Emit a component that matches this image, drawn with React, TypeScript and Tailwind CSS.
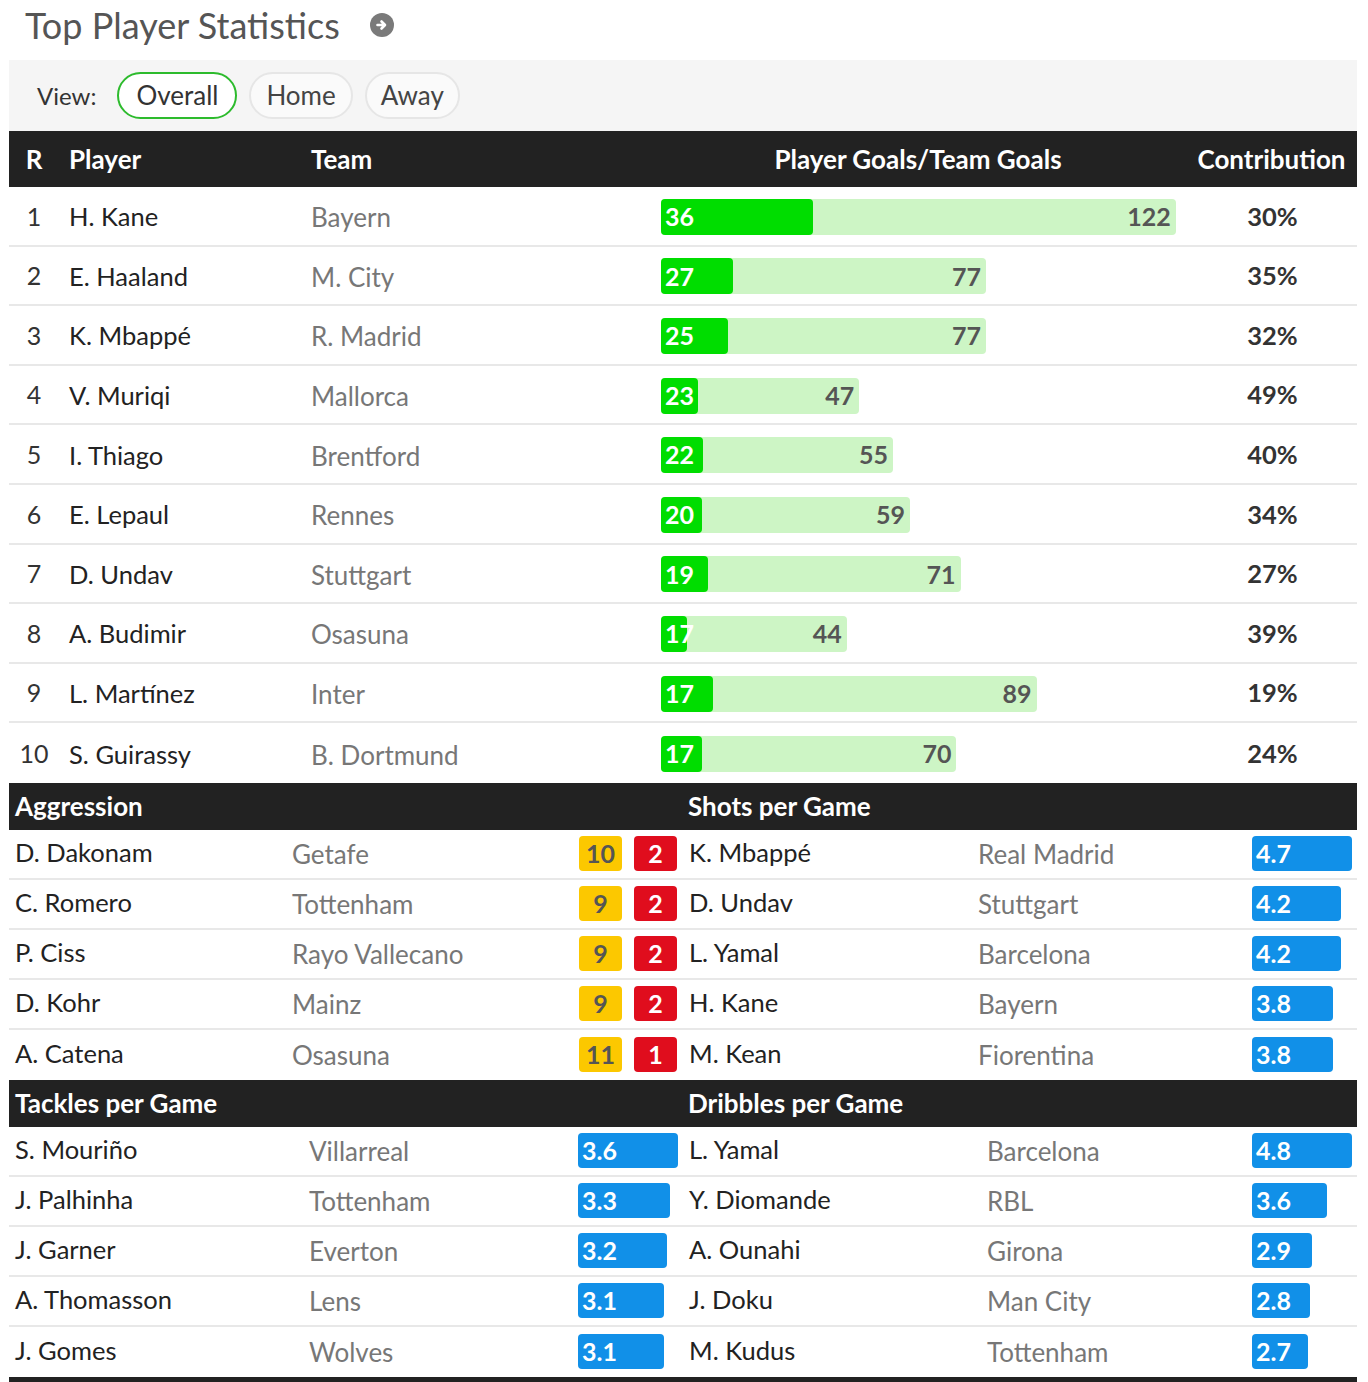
import React from 'react';

type ScorerRow = { rank: number; player: string; team: string; goals: number; teamGoals: number; pct: string };
type CardRow = { player: string; team: string; yellow: number; red: number };
type ValueRow = { player: string; team: string; value: number };

const scorers: ScorerRow[] = [
    { rank: 1, player: 'H. Kane', team: 'Bayern', goals: 36, teamGoals: 122, pct: '30%' },
    { rank: 2, player: 'E. Haaland', team: 'M. City', goals: 27, teamGoals: 77, pct: '35%' },
    { rank: 3, player: 'K. Mbappé', team: 'R. Madrid', goals: 25, teamGoals: 77, pct: '32%' },
    { rank: 4, player: 'V. Muriqi', team: 'Mallorca', goals: 23, teamGoals: 47, pct: '49%' },
    { rank: 5, player: 'I. Thiago', team: 'Brentford', goals: 22, teamGoals: 55, pct: '40%' },
    { rank: 6, player: 'E. Lepaul', team: 'Rennes', goals: 20, teamGoals: 59, pct: '34%' },
    { rank: 7, player: 'D. Undav', team: 'Stuttgart', goals: 19, teamGoals: 71, pct: '27%' },
    { rank: 8, player: 'A. Budimir', team: 'Osasuna', goals: 17, teamGoals: 44, pct: '39%' },
    { rank: 9, player: 'L. Martínez', team: 'Inter', goals: 17, teamGoals: 89, pct: '19%' },
    { rank: 10, player: 'S. Guirassy', team: 'B. Dortmund', goals: 17, teamGoals: 70, pct: '24%' },
];

const aggression: CardRow[] = [
    { player: 'D. Dakonam', team: 'Getafe', yellow: 10, red: 2 },
    { player: 'C. Romero', team: 'Tottenham', yellow: 9, red: 2 },
    { player: 'P. Ciss', team: 'Rayo Vallecano', yellow: 9, red: 2 },
    { player: 'D. Kohr', team: 'Mainz', yellow: 9, red: 2 },
    { player: 'A. Catena', team: 'Osasuna', yellow: 11, red: 1 },
];

const shots: ValueRow[] = [
    { player: 'K. Mbappé', team: 'Real Madrid', value: 4.7 },
    { player: 'D. Undav', team: 'Stuttgart', value: 4.2 },
    { player: 'L. Yamal', team: 'Barcelona', value: 4.2 },
    { player: 'H. Kane', team: 'Bayern', value: 3.8 },
    { player: 'M. Kean', team: 'Fiorentina', value: 3.8 },
];

const tackles: ValueRow[] = [
    { player: 'S. Mouriño', team: 'Villarreal', value: 3.6 },
    { player: 'J. Palhinha', team: 'Tottenham', value: 3.3 },
    { player: 'J. Garner', team: 'Everton', value: 3.2 },
    { player: 'A. Thomasson', team: 'Lens', value: 3.1 },
    { player: 'J. Gomes', team: 'Wolves', value: 3.1 },
];

const dribbles: ValueRow[] = [
    { player: 'L. Yamal', team: 'Barcelona', value: 4.8 },
    { player: 'Y. Diomande', team: 'RBL', value: 3.6 },
    { player: 'A. Ounahi', team: 'Girona', value: 2.9 },
    { player: 'J. Doku', team: 'Man City', value: 2.8 },
    { player: 'M. Kudus', team: 'Tottenham', value: 2.7 },
];

const PX_PER_GOAL = 4.22;
const MAX_GOALS = 122;

function GoalBar({ goals, teamGoals }: { goals: number; teamGoals: number }) {
    const outer = teamGoals * PX_PER_GOAL;
    const inner = (outer * goals) / MAX_GOALS;
    return (
        <div className="relative h-[36px] rounded-[4px] bg-[#cdf5c5]" style={{ width: outer }}>
            <div className="absolute left-0 top-0 h-full rounded-[4px] bg-[#00dd00]" style={{ width: inner }} />
            <span className="absolute left-[4px] top-0 h-full flex items-center text-[25px] font-bold text-white">{goals}</span>
            <span className="absolute right-[5px] top-0 h-full flex items-center text-[25px] font-bold text-[#555]">{teamGoals}</span>
        </div>
    );
}

function ValueBar({ value, max }: { value: number; max: number }) {
    return (
        <div className="h-[35px] rounded-[4px] bg-[#1190e8] flex items-center pl-[4px]" style={{ width: (value / max) * 100 }}>
            <span className="text-[25px] font-bold text-white">{value.toFixed(1)}</span>
        </div>
    );
}

function SectionHeader({ left, right }: { left: string; right: string }) {
    return (
        <div className="flex h-[47px] bg-[#222] text-white text-[26px] font-bold">
            <div className="w-[674px] flex items-center pl-[6px]">{left}</div>
            <div className="w-[674px] flex items-center pl-[5px]">{right}</div>
        </div>
    );
}

export default function App() {
    const shotsMax = Math.max(...shots.map((s) => s.value));
    const tacklesMax = Math.max(...tackles.map((s) => s.value));
    const dribblesMax = Math.max(...dribbles.map((s) => s.value));

    return (
        <div className="w-[1368px] bg-white font-['Lato','Noto_Sans',sans-serif]">
            <div className="h-[60px] flex items-center pl-[25px] pb-[10px]">
                <h2 className="text-[36px] text-[#555]">Top Player Statistics</h2>
                <div className="ml-[30px] w-[24px] h-[24px] rounded-full bg-[#7a7a7a] flex items-center justify-center">
                    <svg width="14" height="14" viewBox="0 0 14 14">
                        <path d="M2.5 7h7M6.5 3.5L10 7l-3.5 3.5" stroke="white" strokeWidth="2.6" fill="none" strokeLinecap="round" strokeLinejoin="round" />
                    </svg>
                </div>
            </div>

            <div className="w-[1348px] ml-[9px]">
                {/* view switcher */}
                <div className="h-[71px] bg-[#f5f5f5] flex items-center pl-[28px] gap-[12px] text-[26px]">
                    <span className="text-[#333] text-[24px] mr-[9px]">View:</span>
                    <button className="h-[47px] px-[17px] rounded-full border-2 border-[#2dbb2d] bg-white text-[#333]">Overall</button>
                    <button className="h-[47px] px-[15px] rounded-full border-2 border-[#e6e6e6] bg-[#fafafa] text-[#444]">Home</button>
                    <button className="h-[47px] px-[14px] rounded-full border-2 border-[#e6e6e6] bg-[#fafafa] text-[#444]">Away</button>
                </div>

                {/* top scorers */}
                <div className="grid grid-cols-[50px_242px_349px_536px_171px] h-[56px] bg-[#222] text-white text-[26px] font-bold items-center">
                    <div className="text-center">R</div>
                    <div className="pl-[10px]">Player</div>
                    <div className="pl-[10px]">Team</div>
                    <div className="text-center">Player Goals/Team Goals</div>
                    <div className="text-center">Contribution</div>
                </div>
                {scorers.map((row, i) => (
                    <div
                        key={row.rank}
                        className={`grid grid-cols-[50px_242px_349px_536px_171px] h-[59.6px] items-center ${i < scorers.length - 1 ? 'border-b-2 border-[#e8e8e8]' : ''}`}
                    >
                        <div className="text-center text-[#333] text-[25px] pt-[1px]">{row.rank}</div>
                        <div className="pl-[10px] text-[#222] text-[25.5px] pt-[1px]">{row.player}</div>
                        <div className="pl-[10px] pt-[4px] text-[#777] text-[26px]">{row.team}</div>
                        <div className="pl-[11px] pt-[2px]">
                            <GoalBar goals={row.goals} teamGoals={row.teamGoals} />
                        </div>
                        <div className="text-center font-bold text-[#333] text-[25.5px] pl-[2px]">{row.pct}</div>
                    </div>
                ))}

                {/* aggression / shots */}
                <SectionHeader left="Aggression" right="Shots per Game" />
                {aggression.map((row, i) => (
                    <div key={row.player} className={`flex h-[50px] ${i < 4 ? 'border-b-2 border-[#e8e8e8]' : ''}`}>
                        <div className="w-[674px] flex items-center">
                            <div className="w-[277px] pl-[6px] pb-[4px] text-[#222] text-[25.5px]">{row.player}</div>
                            <div className="w-[293px] pl-[6px] pt-[2px] text-[#777] text-[26px]">{row.team}</div>
                            <div className="flex gap-[12px] text-[25px]">
                                <div className="w-[43px] h-[35px] rounded-[4px] bg-[#fcc800] flex items-center justify-center font-bold text-[#555]">{row.yellow}</div>
                                <div className="w-[43px] h-[35px] rounded-[4px] bg-[#e00d1d] flex items-center justify-center font-bold text-white">{row.red}</div>
                            </div>
                        </div>
                        <div className="w-[674px] flex items-center">
                            <div className="w-[289px] pl-[6px] pb-[4px] text-[#222] text-[25.5px]">{shots[i].player}</div>
                            <div className="w-[280px] pl-[6px] pt-[2px] text-[#777] text-[26px]">{shots[i].team}</div>
                            <ValueBar value={shots[i].value} max={shotsMax} />
                        </div>
                    </div>
                ))}

                {/* tackles / dribbles */}
                <SectionHeader left="Tackles per Game" right="Dribbles per Game" />
                <div className="border-b-[5px] border-[#222]">
                    {tackles.map((row, i) => (
                        <div key={row.player} className={`flex h-[50px] ${i < 4 ? 'border-b-2 border-[#e8e8e8]' : ''}`}>
                            <div className="w-[674px] flex items-center">
                                <div className="w-[294px] pl-[6px] pb-[4px] text-[#222] text-[25.5px]">{row.player}</div>
                                <div className="w-[275px] pl-[6px] pt-[2px] text-[#777] text-[26px]">{row.team}</div>
                                <ValueBar value={row.value} max={tacklesMax} />
                            </div>
                            <div className="w-[674px] flex items-center">
                                <div className="w-[298px] pl-[6px] pb-[4px] text-[#222] text-[25.5px]">{dribbles[i].player}</div>
                                <div className="w-[271px] pl-[6px] pt-[2px] text-[#777] text-[26px]">{dribbles[i].team}</div>
                                <ValueBar value={dribbles[i].value} max={dribblesMax} />
                            </div>
                        </div>
                    ))}
                </div>
            </div>
        </div>
    );
}
